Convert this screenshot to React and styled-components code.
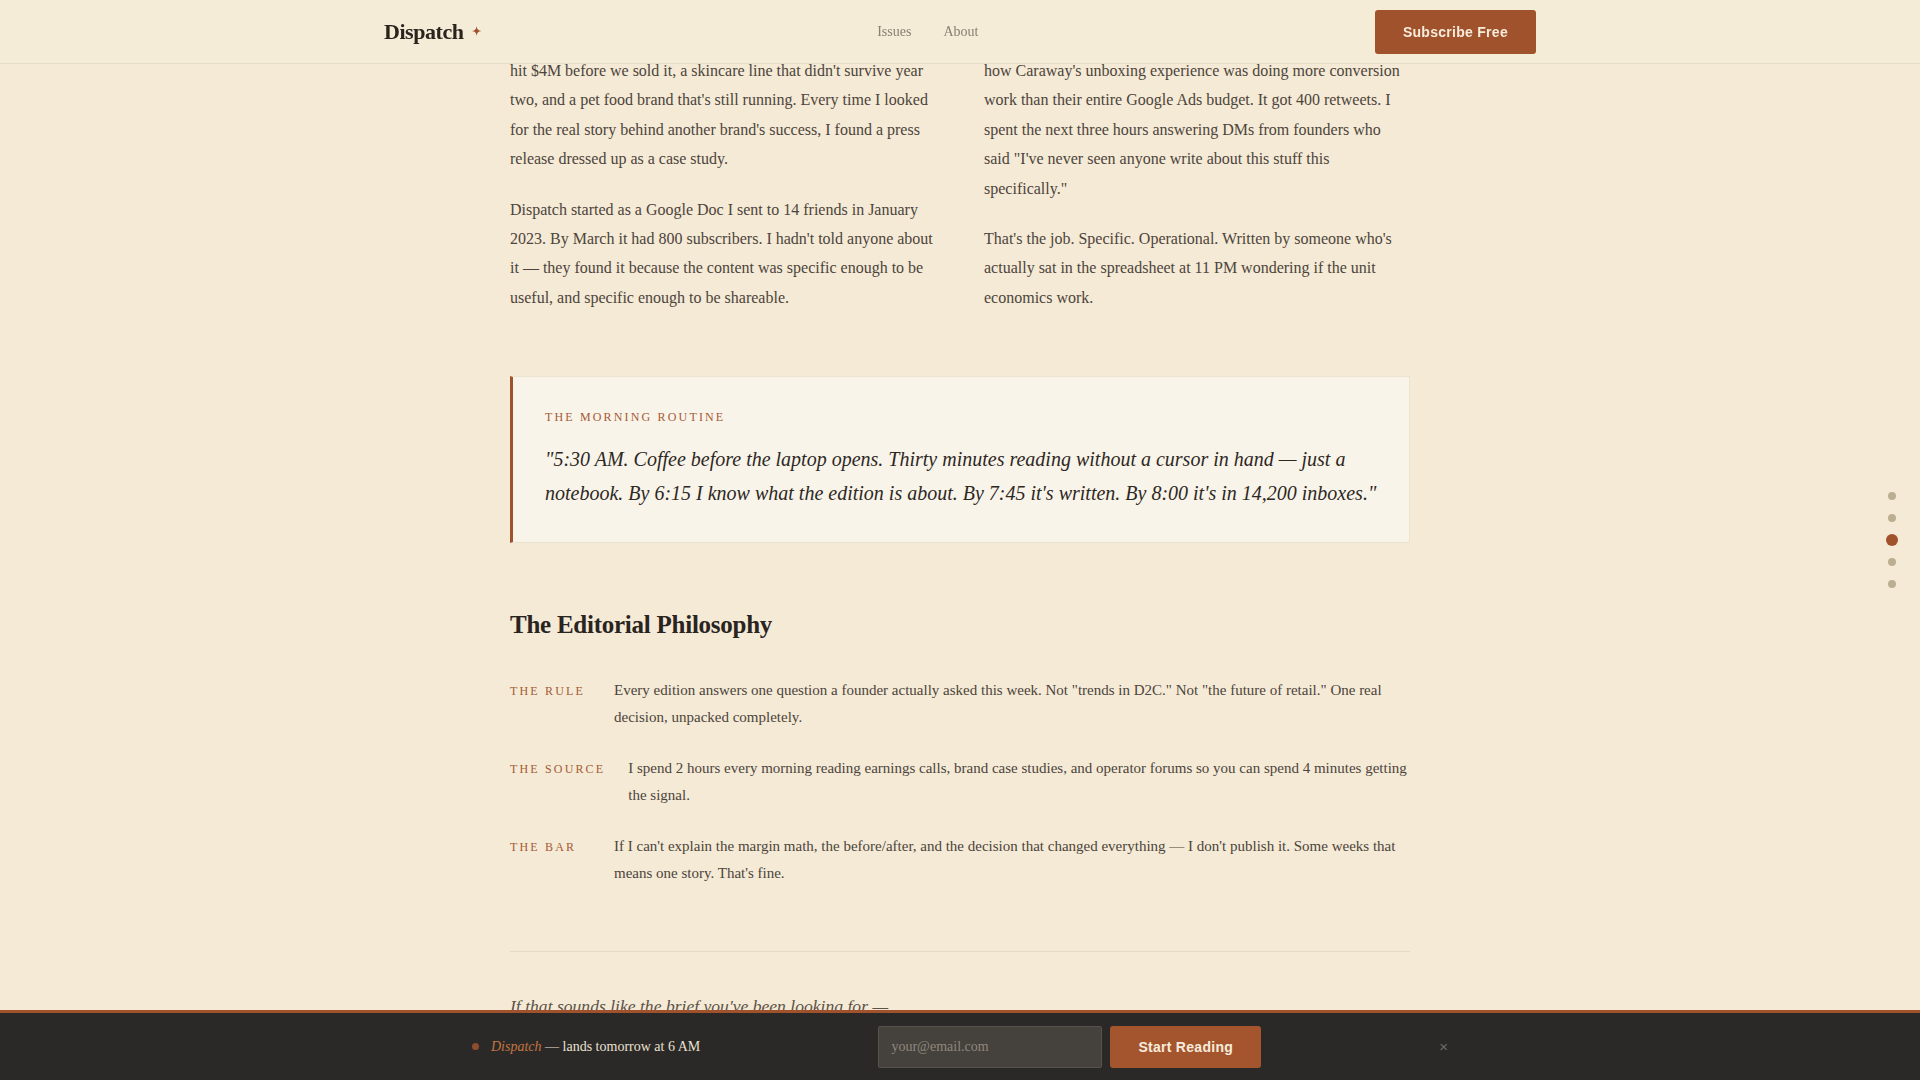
import React from "react";
import styled, { createGlobalStyle } from "styled-components";

const GlobalStyle = createGlobalStyle`
  html, body {
    margin: 0;
    padding: 0;
    background: #f4ead6;
  }
  body {
    font-family: "Liberation Serif", "Times New Roman", serif;
    color: #4d443b;
  }
  * { box-sizing: border-box; }
`;

const Header = styled.header`
  position: fixed;
  top: 0;
  left: 0;
  right: 0;
  height: 64px;
  background: rgba(245, 235, 216, 0.97);
  border-bottom: 1px solid #e6dcc7;
  z-index: 10;
`;

const HeaderInner = styled.div`
  max-width: 1200px;
  height: 100%;
  margin: 0 auto;
  padding: 0 24px;
  display: flex;
  align-items: center;
  justify-content: space-between;
`;

const Logo = styled.a`
  display: flex;
  align-items: center;
  gap: 8px;
  font-size: 22px;
  font-weight: 700;
  letter-spacing: -0.02em;
  color: #2a241f;
  text-decoration: none;
`;

const Star = styled.span`
  color: #a0522d;
  font-size: 11px;
  letter-spacing: 0;
`;

const Nav = styled.nav`
  display: flex;
  gap: 32px;
`;

const NavLink = styled.a`
  font-size: 14px;
  color: #8a7f70;
  text-decoration: none;
`;

const PrimaryButton = styled.button`
  height: ${(p) => p.$h || 44}px;
  padding: 0 28px;
  border: none;
  border-radius: 3px;
  background: ${(p) => p.$bg || "#a0522d"};
  color: #f7ecdc;
  font-family: "Liberation Sans", Arial, sans-serif;
  font-weight: 700;
  font-size: 14px;
  letter-spacing: 0.02em;
  cursor: pointer;
`;

const Main = styled.main`
  max-width: 900px;
  margin: 0 auto;
  padding: 56px 0 140px;
`;

const Columns = styled.div`
  display: grid;
  grid-template-columns: 1fr 1fr;
  column-gap: 48px;
  margin-bottom: 64px;
`;

const Para = styled.p`
  margin: 0 0 1.3em;
  font-size: 16px;
  line-height: 1.84;
  &:last-child {
    margin-bottom: 0;
  }
`;

const QuoteBox = styled.blockquote`
  margin: 0 0 66px;
  padding: 32px;
  background: #f9f4ea;
  border: 1px solid #ebe2d0;
  border-left: 3px solid #a0522d;
`;

const SmallCaps = styled.div`
  font-size: 12px;
  letter-spacing: 0.18em;
  text-transform: uppercase;
  color: #a65a35;
  line-height: 1.4;
  white-space: nowrap;
  flex-shrink: 0;
`;

const QuoteLabel = styled(SmallCaps)`
  margin-bottom: 16px;
`;

const RowLabel = styled(SmallCaps)`
  min-width: 81px;
`;

const QuoteText = styled.p`
  margin: 0;
  font-style: italic;
  font-size: 20px;
  line-height: 1.7;
  color: #2e2823;
`;

const Heading = styled.h2`
  margin: 0 0 35px;
  font-size: 25px;
  font-weight: 700;
  letter-spacing: -0.01em;
  line-height: 1.3;
  color: #2a241f;
`;

const Rows = styled.div`
  display: flex;
  flex-direction: column;
  gap: 24px;
`;

const Row = styled.div`
  display: flex;
  align-items: baseline;
  gap: 23px;
`;

const RowText = styled.p`
  margin: 0;
  font-size: 15px;
  line-height: 1.8;
  color: #4d443b;
`;

const Divider = styled.hr`
  border: none;
  border-top: 1px solid #e3d9c6;
  margin: 64px 0 40px;
`;

const Closing = styled.p`
  margin: 0;
  font-style: italic;
  font-size: 17.6px;
  line-height: 1.6;
  color: #5c5248;
`;

const SideNav = styled.div`
  position: fixed;
  right: 22px;
  top: 50%;
  transform: translateY(-50%);
  display: flex;
  flex-direction: column;
  align-items: center;
  z-index: 5;
`;

const DotSlot = styled.div`
  width: 12px;
  height: 22px;
  display: flex;
  align-items: center;
  justify-content: center;
`;

const Dot = styled.span`
  display: block;
  width: ${(p) => (p.$active ? 12 : 8)}px;
  height: ${(p) => (p.$active ? 12 : 8)}px;
  border-radius: 50%;
  background: ${(p) => (p.$active ? "#a0522d" : "#bcae90")};
`;

const BottomBar = styled.div`
  position: fixed;
  left: 0;
  right: 0;
  bottom: 0;
  height: 70px;
  background: #2b2927;
  border-top: 3px solid #a0522d;
  z-index: 10;
`;

const BarInner = styled.div`
  max-width: 1000px;
  height: 100%;
  margin: 0 auto;
  padding: 0 12px;
  display: flex;
  align-items: center;
  justify-content: space-between;
`;

const BarMessage = styled.div`
  display: flex;
  align-items: center;
  gap: 12px;
  font-size: 14px;
  color: #e9e0d0;
`;

const BarDot = styled.span`
  width: 7px;
  height: 7px;
  border-radius: 50%;
  background: #8f4d30;
`;

const Brand = styled.em`
  color: #c27440;
`;

const Form = styled.form`
  display: flex;
  gap: 8px;
`;

const EmailInput = styled.input`
  width: 224px;
  height: 42px;
  padding: 0 12px;
  background: #45413c;
  border: 1px solid #58524a;
  border-radius: 2px;
  color: #e9e0d0;
  font-family: "Liberation Serif", "Times New Roman", serif;
  font-size: 14px;
  outline: none;
  &::placeholder {
    color: #8f877c;
  }
`;

const CloseButton = styled.button`
  background: none;
  border: none;
  padding: 0;
  color: #6f6b66;
  font-family: "Liberation Sans", Arial, sans-serif;
  font-size: 15px;
  cursor: pointer;
`;

const philosophy = [
  {
    label: "The Rule",
    text: 'Every edition answers one question a founder actually asked this week. Not "trends in D2C." Not "the future of retail." One real decision, unpacked completely.',
  },
  {
    label: "The Source",
    text: "I spend 2 hours every morning reading earnings calls, brand case studies, and operator forums so you can spend 4 minutes getting the signal.",
  },
  {
    label: "The Bar",
    text: "If I can't explain the margin math, the before/after, and the decision that changed everything — I don't publish it. Some weeks that means one story. That's fine.",
  },
];

export default function App() {
  return (
    <>
      <GlobalStyle />
      <Header>
        <HeaderInner>
          <Logo href="#">
            Dispatch <Star>✦</Star>
          </Logo>
          <Nav>
            <NavLink href="#">Issues</NavLink>
            <NavLink href="#">About</NavLink>
          </Nav>
          <PrimaryButton>Subscribe Free</PrimaryButton>
        </HeaderInner>
      </Header>

      <Main>
        <Columns>
          <div>
            <Para>
              hit $4M before we sold it, a skincare line that didn't survive year two, and a pet food
              brand that's still running. Every time I looked for the real story behind another
              brand's success, I found a press release dressed up as a case study.
            </Para>
            <Para>
              Dispatch started as a Google Doc I sent to 14 friends in January 2023. By March it had
              800 subscribers. I hadn't told anyone about it — they found it because the content was
              specific enough to be useful, and specific enough to be shareable.
            </Para>
          </div>
          <div>
            <Para>
              how Caraway's unboxing experience was doing more conversion work than their entire
              Google Ads budget. It got 400 retweets. I spent the next three hours answering DMs from
              founders who said "I've never seen anyone write about this stuff this specifically."
            </Para>
            <Para>
              That's the job. Specific. Operational. Written by someone who's actually sat in the
              spreadsheet at 11 PM wondering if the unit economics work.
            </Para>
          </div>
        </Columns>

        <QuoteBox>
          <QuoteLabel>The Morning Routine</QuoteLabel>
          <QuoteText>
            "5:30 AM. Coffee before the laptop opens. Thirty minutes reading without a cursor in hand
            — just a notebook. By 6:15 I know what the edition is about. By 7:45 it's written. By
            8:00 it's in 14,200 inboxes."
          </QuoteText>
        </QuoteBox>

        <Heading>The Editorial Philosophy</Heading>
        <Rows>
          {philosophy.map((item) => (
            <Row key={item.label}>
              <RowLabel>{item.label}</RowLabel>
              <RowText>{item.text}</RowText>
            </Row>
          ))}
        </Rows>

        <Divider />
        <Closing>If that sounds like the brief you've been looking for —</Closing>
      </Main>

      <SideNav>
        {[0, 1, 2, 3, 4].map((i) => (
          <DotSlot key={i}>
            <Dot $active={i === 2} />
          </DotSlot>
        ))}
      </SideNav>

      <BottomBar>
        <BarInner>
          <BarMessage>
            <BarDot />
            <span>
              <Brand>Dispatch</Brand> — lands tomorrow at 6 AM
            </span>
          </BarMessage>
          <Form onSubmit={(e) => e.preventDefault()}>
            <EmailInput type="email" placeholder="your@email.com" />
            <PrimaryButton $h={42} $bg="#a5552e" type="submit">
              Start Reading
            </PrimaryButton>
          </Form>
          <CloseButton aria-label="Close">×</CloseButton>
        </BarInner>
      </BottomBar>
    </>
  );
}
